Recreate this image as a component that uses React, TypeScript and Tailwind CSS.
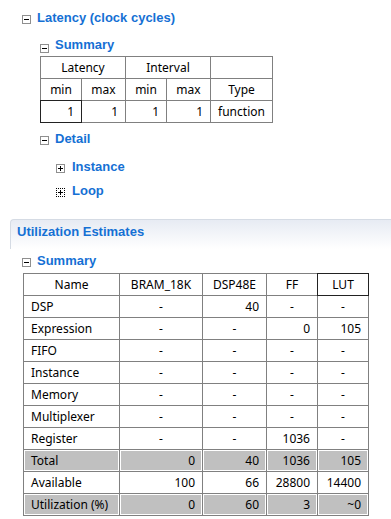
import React from "react";

function Box({ plus = false, dotted = false }: { plus?: boolean; dotted?: boolean }) {
  return (
    <span
      className={
        "relative inline-block w-[9px] h-[9px] shrink-0 bg-white " +
        (dotted ? "border border-dotted border-black" : "border border-[#8f8f8f]")
      }
    >
      <span className="absolute left-[1px] top-[3px] w-[5px] h-px bg-black" />
      {plus && <span className="absolute left-[3px] top-[1px] w-px h-[5px] bg-black" />}
    </span>
  );
}

const heading =
  "font-bold text-[13px] text-[#1570d4] leading-none font-['Liberation_Sans',Arial,sans-serif] ";

type Cell = {
  t: string;
  a?: "l" | "c" | "r";
  span?: number;
  gray?: boolean;
  sel?: boolean;
};

function Grid({ cols, rows }: { cols: string; rows: Cell[][] }) {
  return (
    <div className={"grid border-l border-t border-[#808080] w-max " + cols}>
      {rows.flatMap((r, ri) =>
        r.map((c, ci) => (
          <div
            key={ri + "-" + ci}
            className={
              "relative h-[22px] border-r border-b border-[#808080] px-[7px] flex items-center text-[12px] text-black whitespace-nowrap " +
              (c.span === 2 ? "col-span-2 " : "") +
              (c.a === "l" ? "justify-start " : c.a === "r" ? "justify-end " : "justify-center ") +
              (c.gray ? "bg-[#c0c0c0] shadow-[inset_0_0_0_1px_#ffffff] " : "bg-white ")
            }
          >
            {c.t}
            {c.sel && (
              <span className="absolute -left-px -top-px -right-px -bottom-px border border-[#222]" />
            )}
          </div>
        ))
      )}
    </div>
  );
}

export default function App() {
  const t1: Cell[][] = [
    [{ t: "Latency", span: 2 }, { t: "Interval", span: 2 }, { t: "" }],
    [{ t: "min" }, { t: "max" }, { t: "min" }, { t: "max" }, { t: "Type" }],
    [{ t: "1", a: "r", sel: true }, { t: "1", a: "r" }, { t: "1", a: "r" }, { t: "1", a: "r" }, { t: "function" }],
  ];

  const d = "-";
  const body: [string, string, string, string, string, boolean?][] = [
    ["DSP", d, "40", d, d],
    ["Expression", d, d, "0", "105"],
    ["FIFO", d, d, d, d],
    ["Instance", d, d, d, d],
    ["Memory", d, d, d, d],
    ["Multiplexer", d, d, d, d],
    ["Register", d, d, "1036", d],
    ["Total", "0", "40", "1036", "105", true],
    ["Available", "100", "66", "28800", "14400"],
    ["Utilization (%)", "0", "60", "3", "~0", true],
  ];
  const t2: Cell[][] = [
    [{ t: "Name" }, { t: "BRAM_18K" }, { t: "DSP48E" }, { t: "FF" }, { t: "LUT", sel: true }],
    ...body.map((r) => {
      const g = !!r[5];
      return [
        { t: r[0], a: "l" as const, gray: g },
        ...[r[1], r[2], r[3], r[4]].map((v) => ({
          t: v,
          a: (v === "-" ? "c" : "r") as "c" | "r",
          gray: g,
        })),
      ];
    }),
  ];

  return (
    <div className="w-[391px] h-[519px] bg-white overflow-hidden font-['Noto_Sans',Arial,sans-serif]">
      <div className="flex items-center h-[20px] mt-[9px] pl-[22px] gap-[6px]">
        <Box />
        <span className={heading + "-translate-y-[2px]"}>Latency (clock cycles)</span>
      </div>
      <div className="flex items-center h-[16px] mt-[11px] pl-[40px] gap-[6px]">
        <Box />
        <span className={heading + "-translate-y-[4px]"}>Summary</span>
      </div>
      <div className="ml-[40px]">
        <Grid cols="grid-cols-[41px_44px_41px_44px_62px]" rows={t1} />
      </div>
      <div className="flex items-center h-[20px] mt-[7px] pl-[40px] gap-[6px]">
        <Box />
        <span className={heading + "-translate-y-[2px]"}>Detail</span>
      </div>
      <div className="flex items-center h-[20px] mt-[8px] pl-[56px] gap-[7px]">
        <Box plus />
        <span className={heading + "-translate-y-[2px]"}>Instance</span>
      </div>
      <div className="flex items-center h-[20px] mt-[4px] pl-[56px] gap-[7px]">
        <Box plus dotted />
        <span className={heading + "-translate-y-[2px]"}>Loop</span>
      </div>

      <div className="mt-[17px] ml-[10px] h-[30px] border-t border-l border-[#d5dbe4] rounded-tl-[4px] bg-linear-to-b from-[#e7ebf3] to-white">
        <div className="h-[24px] flex items-center pl-[6px]">
          <span className={heading + "-translate-y-[1px]"}>Utilization Estimates</span>
        </div>
      </div>

      <div className="flex items-center h-[20px] mt-[3px] pl-[22px] gap-[6px]">
        <Box />
        <span className={heading + "-translate-y-[2px]"}>Summary</span>
      </div>
      <div className="ml-[23px] mt-[1px]">
        <Grid cols="grid-cols-[96px_83px_64px_51px_51px]" rows={t2} />
      </div>
    </div>
  );
}
